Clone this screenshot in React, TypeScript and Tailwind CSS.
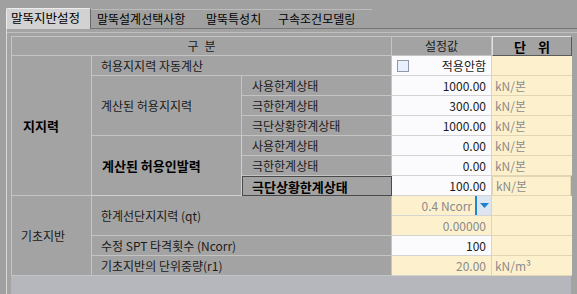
import React from "react";

const L = "border-r border-b border-[#c4c4c4]";

function Label({ children, cls = "" }: { children: React.ReactNode; cls?: string }) {
  return <div className={`${L} flex items-center ${cls}`}>{children}</div>;
}

function Val({ children, yellow = false, gray = false, between = false }: { children?: React.ReactNode; yellow?: boolean; gray?: boolean; between?: boolean }) {
  return (
    <div
      className={`border-r border-b border-[#d4d4d4] flex items-center pr-[5px] ${between ? "justify-between pl-[5px]" : "justify-end"} ${yellow ? "bg-[#fdf1cd]" : "bg-[#fbfbfd]"} ${gray ? "text-[#8a8a8a]" : "text-[#1a1a1a]"}`}
    >
      {children}
    </div>
  );
}

function Unit({ children, cls = "" }: { children?: React.ReactNode; cls?: string }) {
  return (
    <div className={`border-b border-[#e2d6b4] bg-[#fdf1cd] flex items-center pl-[3px] text-[#8c8c8c] ${cls}`}>
      {children}
    </div>
  );
}

export default function App() {
  return (
    <div className="w-[577px] h-[294px] bg-[#a0a0a0] overflow-hidden font-['Noto_Sans_CJK_KR','Noto_Sans',sans-serif] text-[12px] leading-none text-[#1a1a1a]">
      {/* Tabs */}
      <div className="h-[28px] flex items-end pl-[6px] relative">
        <div className="h-[21px] w-[85px] bg-[#d2d2d2] border-t border-l border-[#ececec] border-r border-r-[#6a6a6a] flex items-center pl-[4px] pb-[1px] relative z-10 -mb-px rounded-t-[2px] text-[12.5px] text-black">
          말뚝지반설정
        </div>
        <div className="h-[19px] w-[109px] flex items-center pl-[6px] border-t border-[#bcbcbc] text-black">말뚝설계선택사항</div>
        <div className="h-[19px] w-[72px] flex items-center pl-[6px] border-t border-[#bcbcbc] text-black">말뚝특성치</div>
        <div className="h-[19px] w-[100px] flex items-center pl-[6px] border-t border-[#bcbcbc] text-black">구속조건모델링</div>
      </div>
      {/* Panel */}
      <div className="h-[266px] border-t border-[#767676] ml-[6px] border-l border-l-[#d8d8d8] bg-[#a3a3a3]">
        <div className="mt-[3px] border-t border-[#bfbfbf] h-[262px] pl-[4px]">
          <div className="pt-[3px]">
            <div className="grid grid-cols-[80px_150px_150px_100px_80px] grid-rows-[repeat(12,20px)] w-[560px] border-l border-[#c4c4c4]">
              {/* Header */}
              <div className={`${L} col-span-3 flex items-center justify-center gap-[6px] border-t`}>
                <span>구</span>
                <span>분</span>
              </div>
              <div className={`${L} flex items-center justify-center border-t`}>설정값</div>
              <div className="border border-[#5a5a5a] border-t-[#e0e0e0] border-l-[#e0e0e0] flex items-center justify-center gap-[12px] font-bold text-[13px] text-black">
                <span>단</span>
                <span>위</span>
              </div>

              {/* 지지력 */}
              <div className={`${L} row-span-7 flex items-center pl-[11px] font-bold text-[13px] text-black`}>지지력</div>
              <Label cls="col-span-2 pl-[9px]">허용지지력 자동계산</Label>
              <Val between>
                <span className="w-[12px] h-[12px] border border-[#8d99aa] bg-[#e9f0fb]" />
                <span>적용안함</span>
              </Val>
              <Unit />

              <Label cls="row-span-3 pl-[9px]">계산된 허용지지력</Label>
              <Label cls="pl-[10px]">사용한계상태</Label>
              <Val>1000.00</Val>
              <Unit>kN/본</Unit>
              <Label cls="pl-[10px]">극한한계상태</Label>
              <Val>300.00</Val>
              <Unit>kN/본</Unit>
              <Label cls="pl-[10px]">극단상황한계상태</Label>
              <Val>1000.00</Val>
              <Unit>kN/본</Unit>

              <Label cls="row-span-3 pl-[10px] font-bold text-[13px] text-black border-[#d0d0d0]">계산된 허용인발력</Label>
              <Label cls="pl-[10px]">사용한계상태</Label>
              <Val>0.00</Val>
              <Unit>kN/본</Unit>
              <Label cls="pl-[10px]">극한한계상태</Label>
              <Val>0.00</Val>
              <Unit>kN/본</Unit>
              <div className="border border-[#4a4a4a] flex items-center pl-[9px] font-bold text-[13px] text-black">극단상황한계상태</div>
              <Val>100.00</Val>
              <Unit cls="border border-[#111111] mr-px">kN/본</Unit>

              {/* 기초지반 */}
              <div className={`${L} row-span-4 flex items-center pl-[9px]`}>기초지반</div>
              <Label cls="col-span-2 row-span-2 pl-[9px]">한계선단지지력 (qt)</Label>
              <div className="border-r border-b border-[#d4d4d4] bg-[#fdf1cd] flex items-center justify-end text-[#8a8a8a]">
                <span className="pr-[3px]">0.4 Ncorr</span>
                <span className="w-[16px] h-[19px] border-l-2 border-[#1f86d4] bg-[#dde5f1] flex items-center justify-center">
                  <svg width="9" height="5" viewBox="0 0 9 5">
                    <path d="M0 0 L9 0 L4.5 5 Z" fill="#1e7fd0" />
                  </svg>
                </span>
              </div>
              <Unit />
              <Val yellow gray>0.00000</Val>
              <Unit />

              <Label cls="col-span-2 pl-[9px]">수정 SPT 타격횟수 (Ncorr)</Label>
              <Val>100</Val>
              <Unit />

              <Label cls="col-span-2 pl-[9px]">기초지반의 단위중량(r1)</Label>
              <Val yellow gray>20.00</Val>
              <Unit>kN/m³</Unit>
            </div>
            <div className="w-[560px] h-[20px] bg-[#b5b7bc]" />
          </div>
        </div>
      </div>
    </div>
  );
}
